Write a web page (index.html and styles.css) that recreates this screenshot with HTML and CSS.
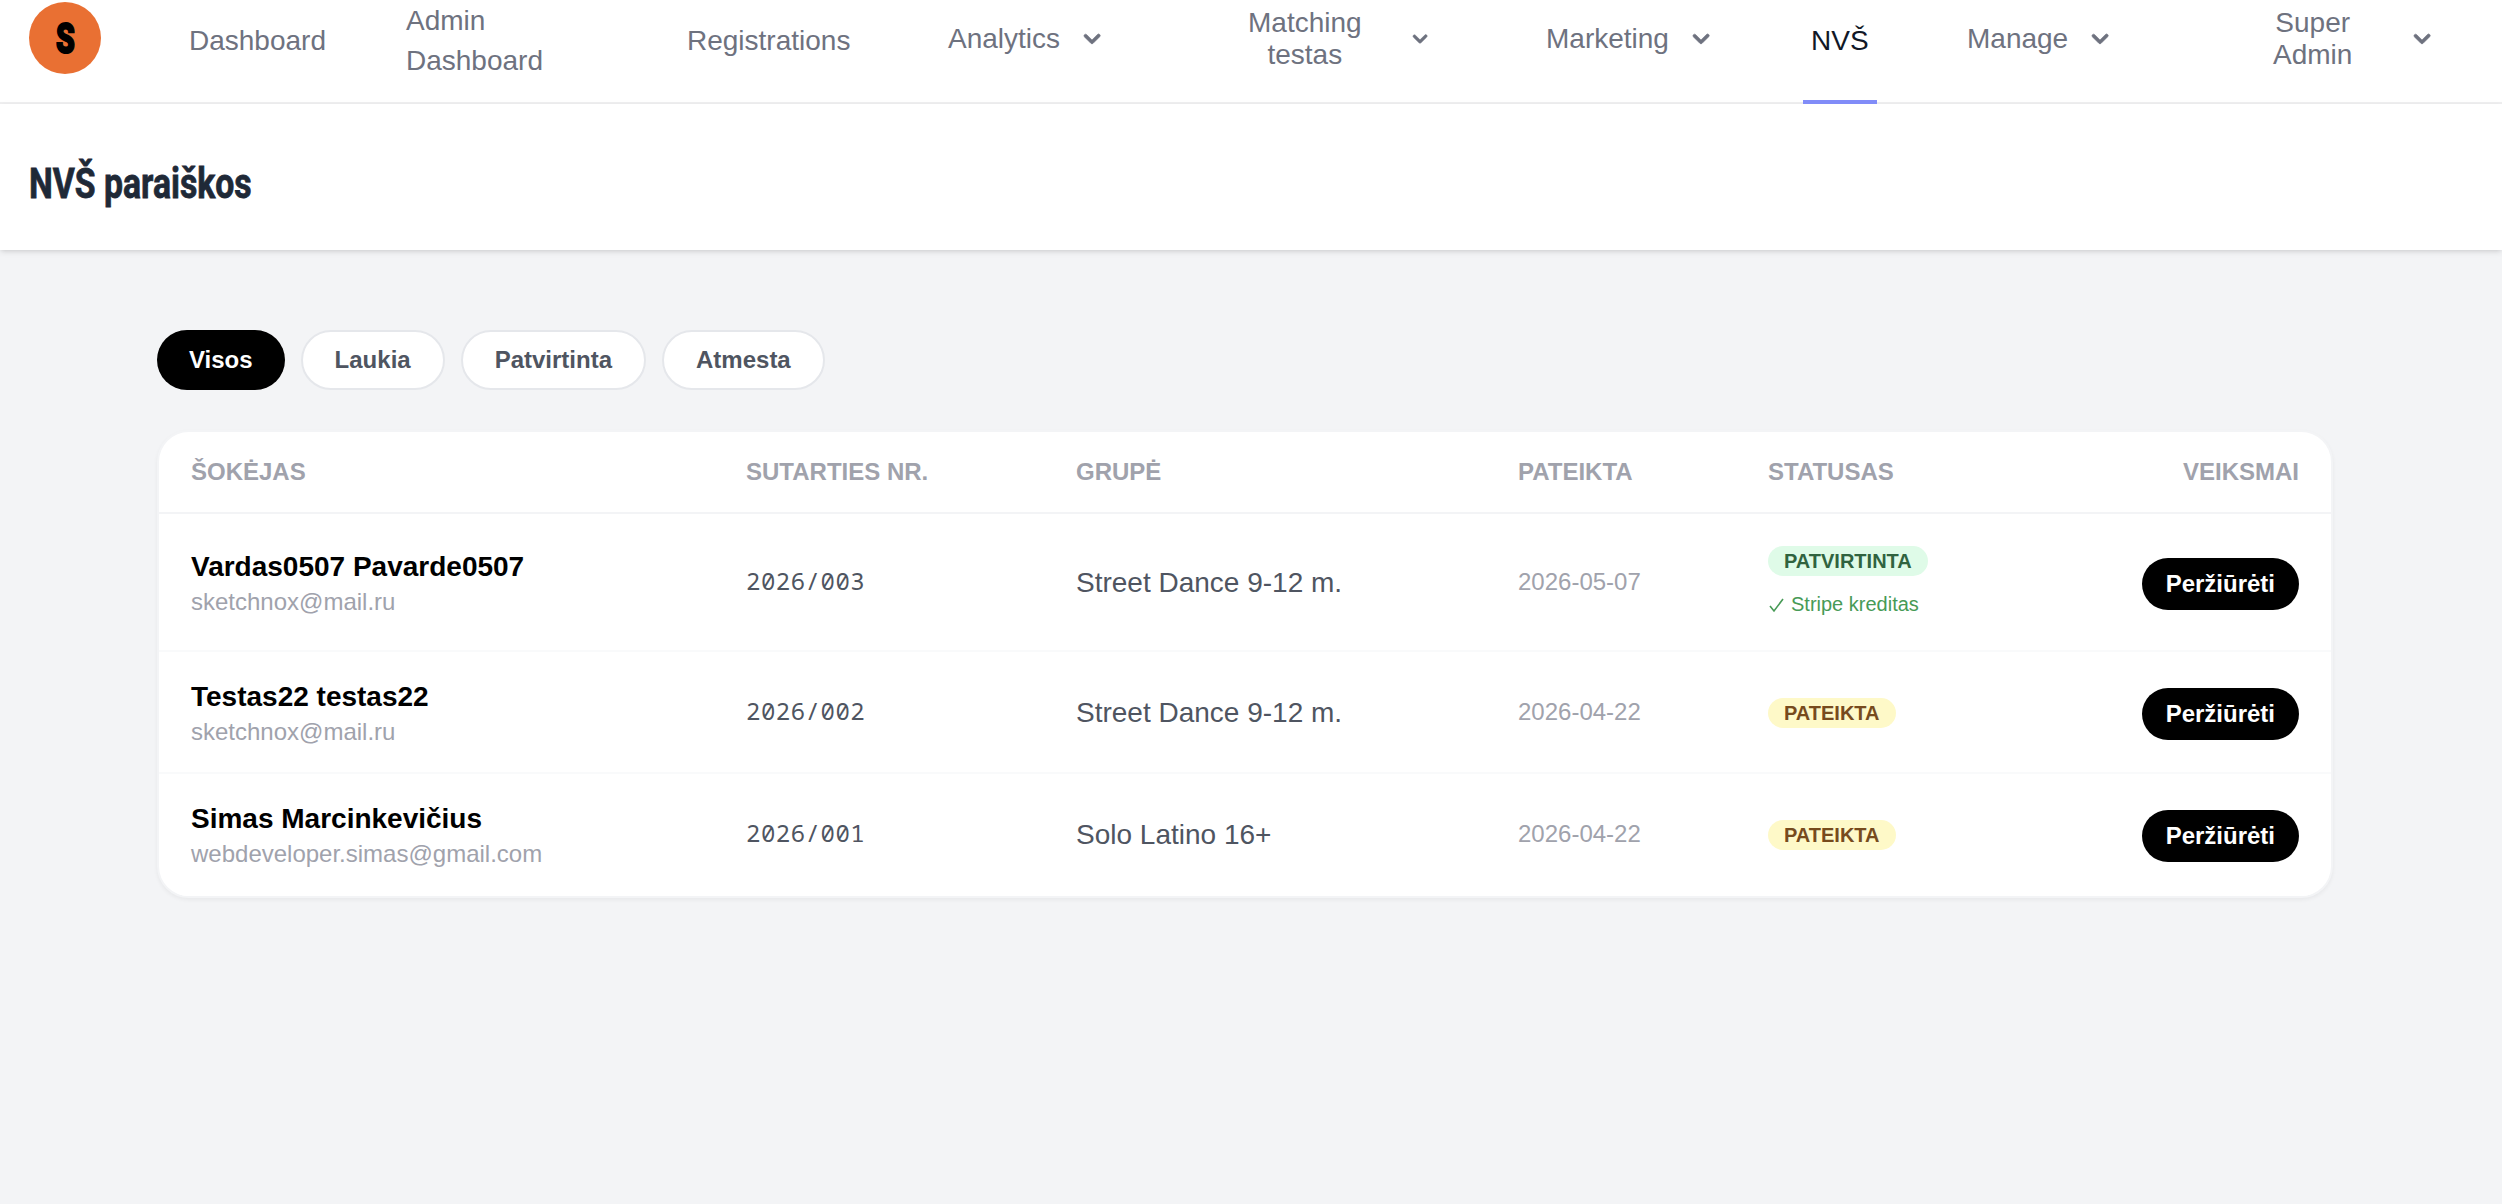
FILE: index.html
```
<!DOCTYPE html>
<html lang="lt">
	<head>
		<title>NVŠ paraiškos</title>
		<meta charset="UTF-8">
		<link rel="stylesheet" href="styles.css">
	</head>
	<body>

		<nav class="navbar">
			<a class="logo"><span>S</span></a>
			<a class="nav-link">Dashboard</a>
			<a class="nav-link">Admin<br>Dashboard</a>
			<a class="nav-link">Registrations</a>
			<button class="nav-drop">Analytics <svg class="chevron" viewBox="0 0 20 20"><path d="M5.3 7.3a1 1 0 0 1 1.4 0L10 10.6l3.3-3.3a1 1 0 1 1 1.4 1.4l-4 4a1 1 0 0 1-1.4 0l-4-4a1 1 0 0 1 0-1.4z"/></svg></button>
			<button class="nav-drop matching">Matching<br>testas <svg class="chevron small" viewBox="0 0 20 20"><path d="M5.3 7.3a1 1 0 0 1 1.4 0L10 10.6l3.3-3.3a1 1 0 1 1 1.4 1.4l-4 4a1 1 0 0 1-1.4 0l-4-4a1 1 0 0 1 0-1.4z"/></svg></button>
			<button class="nav-drop">Marketing <svg class="chevron" viewBox="0 0 20 20"><path d="M5.3 7.3a1 1 0 0 1 1.4 0L10 10.6l3.3-3.3a1 1 0 1 1 1.4 1.4l-4 4a1 1 0 0 1-1.4 0l-4-4a1 1 0 0 1 0-1.4z"/></svg></button>
			<a class="nav-link active">NVŠ</a>
			<button class="nav-drop">Manage <svg class="chevron" viewBox="0 0 20 20"><path d="M5.3 7.3a1 1 0 0 1 1.4 0L10 10.6l3.3-3.3a1 1 0 1 1 1.4 1.4l-4 4a1 1 0 0 1-1.4 0l-4-4a1 1 0 0 1 0-1.4z"/></svg></button>
			<button class="nav-drop super"><span>Super<br>Admin</span> <svg class="chevron" viewBox="0 0 20 20"><path d="M5.3 7.3a1 1 0 0 1 1.4 0L10 10.6l3.3-3.3a1 1 0 1 1 1.4 1.4l-4 4a1 1 0 0 1-1.4 0l-4-4a1 1 0 0 1 0-1.4z"/></svg></button>
		</nav>

		<header class="page-header">
			<h2>NVŠ paraiškos</h2>
		</header>

		<main class="content">
			<div class="tabs">
				<a class="tab selected">Visos</a>
				<a class="tab">Laukia</a>
				<a class="tab">Patvirtinta</a>
				<a class="tab">Atmesta</a>
			</div>

			<div class="card">
				<table>
					<thead>
						<tr>
							<th class="col-name">Šokėjas</th>
							<th class="col-nr">Sutarties nr.</th>
							<th class="col-group">Grupė</th>
							<th class="col-date">Pateikta</th>
							<th class="col-status">Statusas</th>
							<th class="actions">Veiksmai</th>
						</tr>
					</thead>
					<tbody>
						<tr class="tall">
							<td><div class="name">Vardas0507 Pavarde0507</div><div class="email">sketchnox@mail.ru</div></td>
							<td class="nr">2026/003</td>
							<td class="group">Street Dance 9-12 m.</td>
							<td class="date">2026-05-07</td>
							<td><span class="badge green">Patvirtinta</span>
								<div class="credit"><svg class="check" viewBox="0 0 16 16"><path d="M1.5 9L5.5 14L14.5 2"/></svg>Stripe kreditas</div></td>
							<td class="actions"><a class="btn">Peržiūrėti</a></td>
						</tr>
						<tr>
							<td><div class="name">Testas22 testas22</div><div class="email">sketchnox@mail.ru</div></td>
							<td class="nr">2026/002</td>
							<td class="group">Street Dance 9-12 m.</td>
							<td class="date">2026-04-22</td>
							<td><span class="badge yellow">Pateikta</span></td>
							<td class="actions"><a class="btn">Peržiūrėti</a></td>
						</tr>
						<tr>
							<td><div class="name">Simas Marcinkevičius</div><div class="email">webdeveloper.simas@gmail.com</div></td>
							<td class="nr">2026/001</td>
							<td class="group">Solo Latino 16+</td>
							<td class="date">2026-04-22</td>
							<td><span class="badge yellow">Pateikta</span></td>
							<td class="actions"><a class="btn">Peržiūrėti</a></td>
						</tr>
					</tbody>
				</table>
			</div>
		</main>

	</body>
</html>
```
FILE: styles.css
```
* {
	box-sizing: border-box;
}
body {
	margin: 0px;
	min-height: 100vh;
	background-color: #f3f4f6;
	font-family: "Liberation Sans", Arial, sans-serif;
	font-size: 28px;
	line-height: 40px;
	overflow: hidden;
}

/* navigation */
.navbar {
	display: grid;
	grid-template-columns: 160px 217px 281px 261px 300px 298px 257px 164px 306px auto;
	align-items: start;
	height: 104px;
	padding-left: 29px;
	background-color: #fff;
	border-bottom: 2px solid #f0f0f1;
	color: #6e727f;
}
.logo {
	display: flex;
	align-items: center;
	justify-content: center;
	width: 72px;
	height: 72px;
	margin-top: 2px;
	border-radius: 50%;
	background-color: #e97033;
	color: #000;
}
.logo span {
	font-family: Roboto, sans-serif;
	font-size: 43px;
	font-weight: 900;
	-webkit-text-stroke: 2px #000;
	transform: scaleX(0.7);
}
.nav-link {
	display: flex;
	align-items: center;
	height: 82px;
}
.nav-link.active {
	width: 74px;
	height: 104px;
	padding: 0 8px 18px;
	border-bottom: 4px solid #818cf8;
	color: #111827;
}
.nav-drop {
	display: flex;
	align-items: center;
	gap: 16px;
	height: 77px;
	padding: 0;
	border: none;
	background: none;
	color: inherit;
	font: inherit;
	line-height: 32px;
	text-align: center;
}
.chevron {
	flex: none;
	width: 32px;
	height: 32px;
	fill: currentColor;
	stroke: currentColor;
	stroke-width: 0.4;
}
.chevron.small {
	width: 28px;
	height: 28px;
}
.matching {
	gap: 44px;
}
.super {
	gap: 54px;
}

/* page title */
.page-header {
	display: flex;
	align-items: center;
	height: 146px;
	padding-left: 29px;
	background-color: #fff;
	box-shadow: 0 2px 6px rgba(0,0,0,0.1), 0 2px 4px -2px rgba(0,0,0,0.1);
}
.page-header h2 {
	margin: 11px 0 0;
	font-family: Roboto, sans-serif;
	font-size: 43px;
	font-weight: bold;
	color: #1f2937;
	-webkit-text-stroke: 0.8px #1f2937;
	transform: scaleX(0.785);
	transform-origin: left;
}

/* filters */
.content {
	padding: 80px 169px 0 157px;
}
.tabs {
	display: flex;
	gap: 16px;
	margin-bottom: 40px;
}
.tab {
	height: 60px;
	padding: 12px 32px;
	border: 2px solid #e5e7eb;
	border-radius: 30px;
	background-color: #fff;
	color: #4f5561;
	font-size: 24px;
	font-weight: bold;
	line-height: 32px;
}
.tab.selected {
	padding: 14px 32px;
	border: none;
	background-color: #000;
	color: #fff;
}

/* table */
.card {
	border: 2px solid #f3f4f6;
	border-radius: 32px;
	background-color: #fff;
	box-shadow: 0 2px 4px rgba(0,0,0,0.05);
	overflow: hidden;
}
table {
	width: 100%;
	table-layout: fixed;
	border-collapse: separate;
	border-spacing: 0;
}
th {
	height: 82px;
	padding: 0 32px;
	border-bottom: 2px solid #f3f4f6;
	color: #a0a2ac;
	font-size: 24px;
	line-height: 32px;
	text-align: left;
	text-transform: uppercase;
}
td {
	height: 122px;
	padding: 0 32px;
	border-bottom: 2px solid #f9fafb;
}
.tall td {
	height: 138px;
}
tr:last-child td {
	border-bottom-color: #fff;
}
thead tr:last-child th {
	border-bottom-color: #f3f4f6;
}
.col-name {
	width: 555px;
}
.col-nr {
	width: 330px;
}
.col-group {
	width: 442px;
}
.col-date {
	width: 250px;
}
.col-status {
	width: 280px;
}
.name {
	padding-top: 1px;
	line-height: 39px;
	color: #000;
	font-weight: bold;
}
.email,
.date {
	color: #a0a2ac;
	font-size: 24px;
	line-height: 32px;
}
.nr {
	padding-bottom: 2px;
	color: #4f5561;
	font-family: "Noto Sans Mono", "Noto Sans Mono CJK SC", "Liberation Mono", monospace;
	font-size: 24px;
	letter-spacing: 0.5px;
	line-height: 32px;
}
.group {
	padding-top: 1px;
	color: #4f5561;
}
.badge {
	display: block;
	width: fit-content;
	margin-top: 2px;
	padding: 4px 16px;
	border-radius: 15px;
	font-size: 20px;
	font-weight: bold;
	line-height: 22px;
	text-transform: uppercase;
}
.green {
	margin-top: 0;
	background-color: #dffbe8;
	color: #30633f;
}
.yellow {
	background-color: #fef9c8;
	color: #774b1d;
}
.credit {
	display: flex;
	align-items: center;
	gap: 6px;
	margin-top: 15px;
	color: #479a56;
	font-size: 20px;
	line-height: 27px;
}
.check {
	width: 17px;
	height: 16px;
	fill: none;
	stroke: currentColor;
	stroke-width: 1.6;
}
th.actions,
td.actions {
	text-align: right;
}
.btn {
	display: block;
	width: fit-content;
	margin: 4px 0 0 auto;
	padding: 10px 24px;
	border-radius: 26px;
	background-color: #000;
	color: #fff;
	font-size: 24px;
	font-weight: bold;
	line-height: 32px;
}
```
